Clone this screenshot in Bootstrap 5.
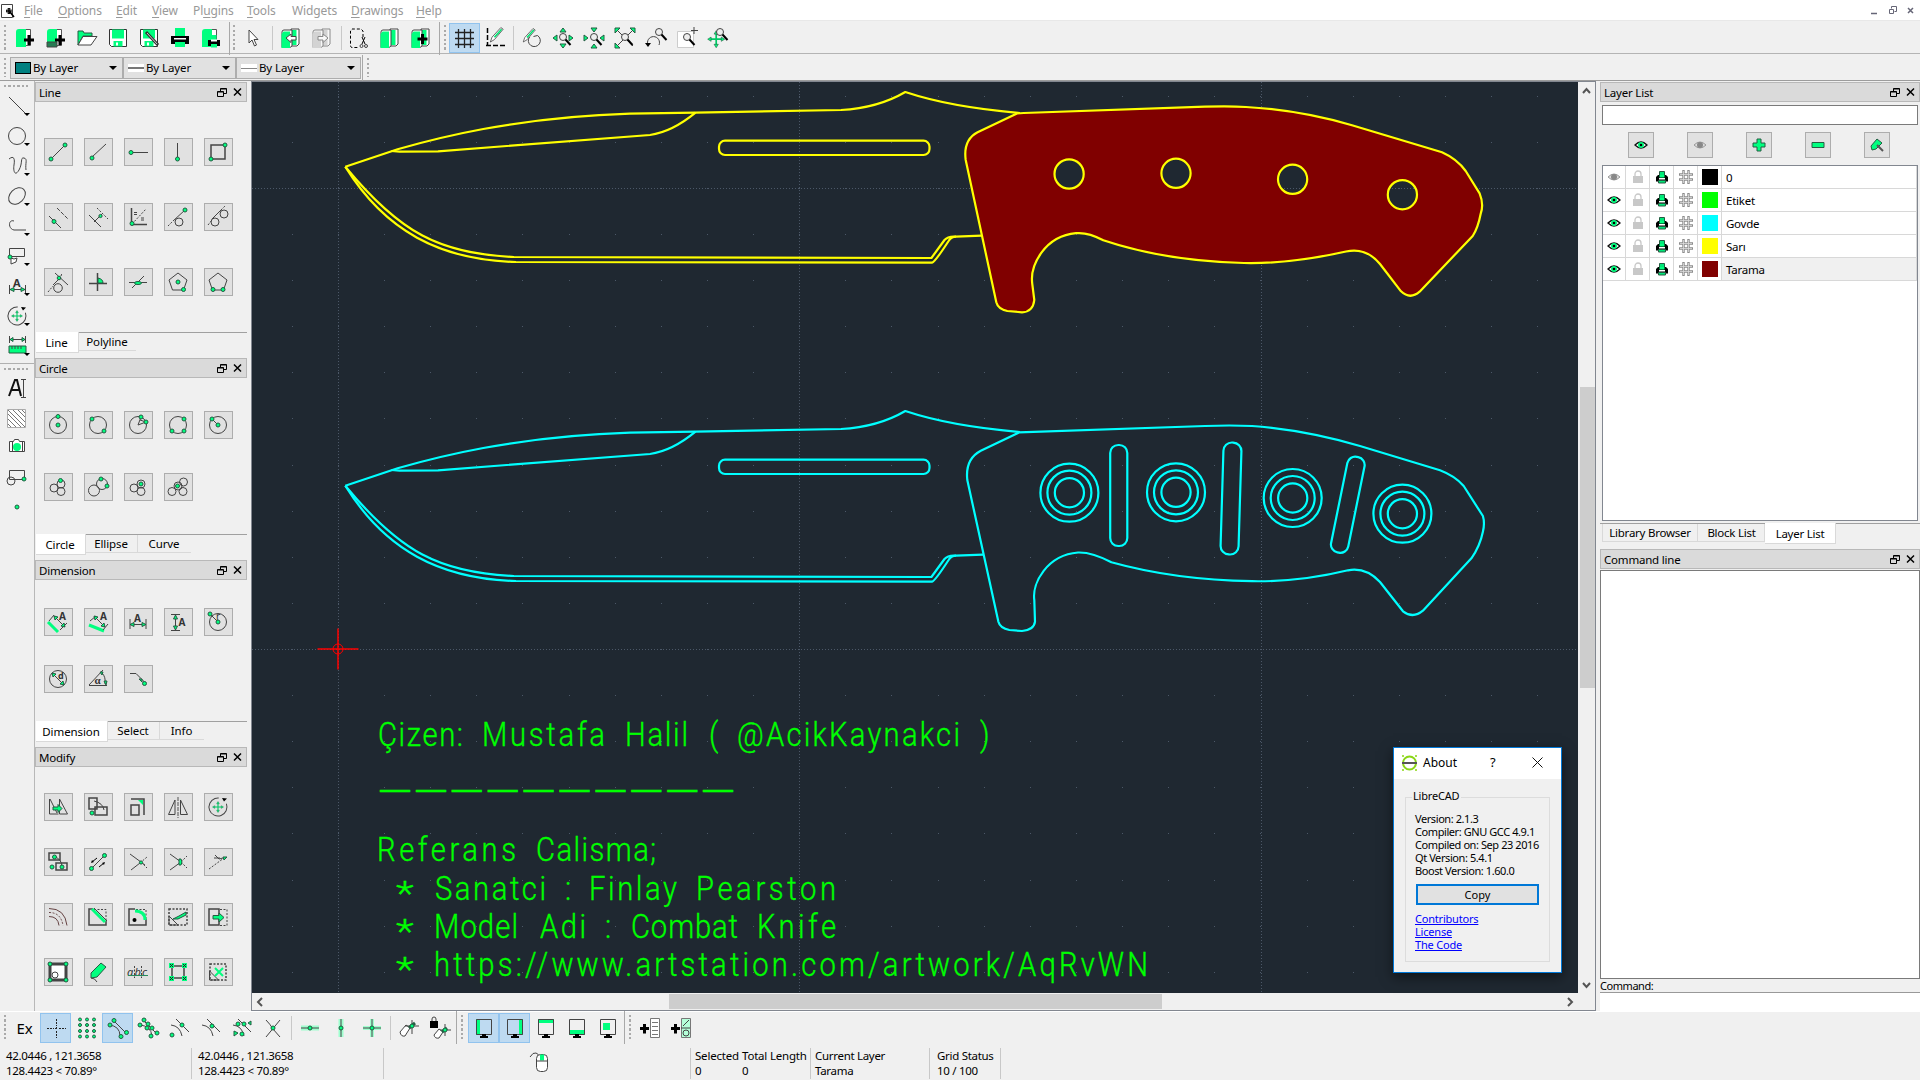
<!DOCTYPE html>
<html lang="en">
<head>
<meta charset="utf-8">
<title>LibreCAD</title>
<link href="https://cdn.jsdelivr.net/npm/bootstrap@5.3.0/dist/css/bootstrap.min.css" rel="stylesheet">
<style>
html,body{height:100%;overflow:hidden}
body{font-family:"Noto Sans","Open Sans",sans-serif;font-size:11px;line-height:14px;color:#000;background:#f0f0f0;letter-spacing:-.1px}
svg{display:block;flex:none;overflow:visible}
.ic{width:24px;height:24px;fill:none;stroke:#444;stroke-width:1}
.ic text{stroke:none;fill:#333;letter-spacing:0}
.g{fill:#00ff7f;stroke:#245c42}
.gn{fill:#00ff7f;stroke:none}
.gl{stroke:#00ff7f;stroke-width:3}
.bk{fill:#000;stroke:none}
.wh{fill:#fff}
.thin{stroke:#999}
.da{stroke-dasharray:2 1.5}
.menubar{height:21px;background:#fff;font-size:12px;color:#999;border-bottom:1px solid #e8e8e8;letter-spacing:-.12px}
.menubar span{position:relative;top:1px}
.menubar u{text-underline-offset:2px}
.tb{height:33px;border-bottom:1px solid #b4b4b4;padding-top:2px}
.tb2{height:27px;border-bottom:1px solid #9c9c9c;padding-top:1px}
.grip{width:2px;height:26px;background:repeating-linear-gradient(#aaa 0 2px,transparent 2px 4.5px)}
.griph{width:27px;height:2px;background:repeating-linear-gradient(90deg,#aaa 0 2px,transparent 2px 4.5px)}
.tbtn{width:31px;height:30px;flex:none;display:flex;align-items:center;justify-content:center;border:1px solid transparent}
.tbtn.on{background:#bedaf1;border-color:#91c3ee}
.vsep{width:1px;background:#c8c8c8;flex:none}
.combo{height:22px;background:#e1e1e1;border:1px solid #adadad;display:flex;align-items:center;flex:none;padding-left:4px;font-size:11.5px}
.combo .car{margin-left:auto;margin-right:5px}
.car{width:0;height:0;border:4px solid transparent;border-top:4px solid #000;border-bottom:0}
.mainrow{height:930px}
.tools{width:35px;border-right:1px solid #b8b8b8;flex:none}
.tools .ic{width:30px;height:30px;margin-left:2px}
.docks{width:216px;flex:none}
.dock{width:212px}
.dtitle{height:20px;background:#dadada;border:1px solid #b8b8b8;display:flex;align-items:center;padding:1px 3px 0;font-size:11.5px;letter-spacing:-.2px;flex:none}
.dtitle svg{width:26px;height:12px;fill:none;stroke:#000;margin:-1px 0 0 auto}
.pads{grid-template-columns:repeat(5,29px);column-gap:11px;padding-left:9px}
.pad{width:29px;height:28px;border:1px solid #adadad;background:#e1e1e1;display:flex;align-items:center;justify-content:center}
.pads .pad svg{margin-left:-1px}
.tabs{border-top:1px solid #a0a0a0;margin-left:1px;font-size:11.5px;height:26px}
.tabx{border:1px solid #d9d9d9;border-width:0 1px 1px 0;height:18px;text-align:center;line-height:18px;flex:none}
.tabx.on{background:#fff;height:21px;line-height:22px;margin-top:-1px}
.docks .tabx{padding-right:1px}
.tabx:last-child:not(.on){border-right:0}
.viewport{flex:none;width:1345px;border:1px solid #828790}
.right{width:320px;margin-left:4px}
.sb{background:#f0f0f0}
.thumb{background:#cdcdcd}
.lrow{display:grid;grid-template-columns:23px 24px 24px 24px 24px 1fr;height:23px}
.lrow>*{border:1px solid #d8d8d8;border-width:0 1px 1px 0;display:flex;align-items:center;justify-content:center;background:#fff}
.lrow>:last-child{justify-content:flex-start;padding:1px 0 0 4px;font-size:11.5px;letter-spacing:-.25px}
.sw{width:16px;height:16px}
.about{position:absolute;left:1393px;top:747px;width:169px;height:226px;border:1px solid #0078d7;background:#f0f0f0;box-shadow:0 4px 12px rgba(0,0,0,.5);line-height:13px;letter-spacing:-.42px}
.atitle{height:31px;background:#fff;font-size:12px;letter-spacing:0;padding-bottom:2px}
.grp{margin:18px 11px 0 11px;height:165px;border:1px solid #dcdcdc;padding:0 0 0 9px;position:relative}
.grp .lg{position:absolute;left:6px;top:-9px;background:#f0f0f0;padding:0 2px 0 1px;letter-spacing:-.2px}
.about a{color:#0000ff;display:block;letter-spacing:-.2px}
.copyb{width:123px;height:21px;border:2px solid #0078d7;background:#e1e1e1;text-align:center;line-height:17px;margin:7px 0 7px 1px;letter-spacing:0}
.status{height:35px;line-height:15px;font-size:11.5px;padding-top:3px;letter-spacing:-.3px}
.status .vsep{height:31px}
.status pre{font:inherit;margin:0;overflow:visible;flex:none}
.cad{font-family:Roboto,"Noto Sans",sans-serif;font-weight:300;font-size:34px;fill:#0f0;stroke:#0f0;stroke-width:.35;letter-spacing:0}
</style>
<script src="https://cdn.jsdelivr.net/npm/bootstrap@5.3.0/dist/js/bootstrap.bundle.min.js"></script>
</head>
<body class="d-flex flex-column">
<svg width="0" height="0" class="position-absolute"><defs>
<circle id="p" r="2" class="g"/>
<g id="win"><path d="M3.500 2.500h6v5h-6zM3.500 3h6" stroke-width="1"/><path fill="#dadada" d="M.5 5.500h6v5h-6zM.5 6h6"/><path stroke-width="1.500" d="M17 2.500l7 7m0-7l-7 7"/></g>
<g id="eye"><path d="M1 6Q7 0 13 6Q7 12 1 6z" fill="#fff" stroke="#111" stroke-width="1.300"/><circle cx="7" cy="6" r="3" class="gn"/><circle cx="7" cy="6" r="1.300" class="bk"/></g>
<g id="eyeg"><path d="M1 6Q7 0 13 6Q7 12 1 6z" fill="#ddd" stroke="#999"/><circle cx="7" cy="6" r="3" fill="#888" stroke="none"/></g>
<g id="lock"><path d="M3 6V4a3 3 0 0 1 6 0v2" fill="none" stroke="#c8c8c8" stroke-width="1.300"/><path d="M1 6h10v7H1z" fill="#c8c8c8" stroke="none"/></g>
<g id="prn"><path d="M3.500 1h5v5h-5z" class="gn" stroke="#245c42"/><path d="M0 6h12v6H0z" class="bk"/><path d="M3 5.500h6v2H3z" class="wh" stroke="none"/><path d="M3 10h6v3.500H3z" class="gn"/></g>
<g id="prl"><path d="M3.500 1.500h5v5h-5z" fill="#00e878" stroke="#245c42"/><path d="M2 5h8l2 2v4.500H0V7z" class="bk"/><path d="M3.500 5h5v2.500h-5z" class="gn"/><path d="M3 8h6v1.500H3z" fill="#fff"/><path d="M2.500 10.500h7v2.500h-7z" fill="#00e878" stroke="#245c42"/></g>
<g id="hash"><path d="M4.500 0v14M9.500 0v14M0 4.500h14M0 9.500h14" stroke="#8c8c8c" stroke-width="2.400"/><path d="M4.500 1v12M9.500 1v12M1 4.500h12M1 9.500h12" stroke="#ddd" stroke-width=".8"/></g>
<g id="doc"><path d="M7.500 3.500h10v16h-10z" fill="#fff" stroke="#555"/><path d="M3 6q0-3 3-3h7v18H3z" class="gn" stroke="#444"/></g>
<g id="docs"><path d="M12 3h8v15l-2 2h-6z" class="wh"/><path d="M11.500 4h6v15h-6z" class="gn"/><path d="M3 6q0-2 2-2h8v16l-2 1.500H3z" class="wh"/><path d="M2.500 8l2-2.500h6.500V22H2.500z" class="gn"/></g>
<g id="plus"><path class="bk" d="M14.500 9h3v3.500H21v3h-3.500V19h-3v-3.500H11v-3h3.500z"/></g>
<g id="floppy"><path d="M3.500 3.500h17v17h-15l-2-2z" class="wh" stroke="#333"/><path d="M6 3.500h12v9H6z" class="gn"/><path d="M7.500 15h9v5.500h-9z" class="gn" stroke="#333"/><path d="M10 16.500h2v3h-2z" class="wh" stroke="none"/></g>
<g id="mag"><circle cx="12" cy="11" r="3.500" fill="#eee"/><path d="M14.500 13.500l5 5.500" stroke="#000" stroke-width="2"/></g>
<g id="pencil"><path d="M3 20l2-6L16 2l3 2L8 17z" class="wh"/><path d="M8 14L17 4" stroke="#00e070" stroke-width="2"/></g>
<g id="arr4"><path d="M12 4v16M4 12h16" stroke="#00c865" stroke-width="2"/><path class="g" stroke-width=".7" d="M12 2l2.500 4h-5zM12 22l2.500-4h-5zM2 12l4-2.500v5zM22 12l-4-2.500v5z"/></g>
<g id="rotar"><circle cx="12" cy="12" r="9" stroke-dasharray="46 10" transform="rotate(-20 12 12)"/><path class="bk" d="M16 3l5 .5-3 3z"/><g transform="translate(5.400 5.400) scale(.55)"><use href="#arr4"/></g></g>
<g id="mon"><path d="M4.500 3.500h15v15h-15z"/><path class="bk" d="M10 18h4v2h2v2H8v-2h2z"/></g>
<path id="dd" class="bk" d="M22 22h6l-3 3z"/>
</defs></svg>

<nav class="menubar d-flex align-items-center flex-shrink-0">
<svg class="ic" style="width:16px;height:16px;margin:1px 8px 0 0" viewBox="0 0 16 16"><path class="wh" d="M1.500 1.500h11v13h-11z"/><circle cx="9" cy="8" r="2.500"/><path d="M10 9l4 5M9 5v6M6 8h5" stroke="#000" stroke-width="1.600"/></svg>
<span style="width:34px"><u>F</u>ile</span><span style="width:58px"><u>O</u>ptions</span><span style="width:36px"><u>E</u>dit</span><span style="width:41px"><u>V</u>iew</span><span style="width:54px">Pl<u>u</u>gins</span><span style="width:45px"><u>T</u>ools</span><span style="width:59px">Widgets</span><span style="width:65px"><u>D</u>rawings</span><span><u>H</u>elp</span>
<svg class="ms-auto me-1" width="46" height="12" fill="none" stroke="#667"><path stroke-width="1.500" d="M1 9.500h6"/><path d="M21.500 4.500v-2h5v5h-2M19.500 5.500h4v4h-4z"/><path d="M38 4l5 5m0-5l-5 5" stroke-width="1.500"/></svg>
</nav>

<div class="tb d-flex align-items-center flex-shrink-0">
<div class="grip ms-1" style="margin-right:3.500px"></div>
<div class="tbtn"><svg class="ic"><use href="#doc"/><use href="#plus"/></svg></div>
<div class="tbtn"><svg class="ic"><use href="#doc"/><path d="M3 16h10v5H3z" fill="#277a52"/><use href="#plus"/></svg></div>
<div class="tbtn"><svg class="ic"><path class="g" d="M3 19V5h5l1 2h8v3H8z"/><path class="wh" d="M3 19l5-8.500h14L16 19z" fill="#ddd"/></svg></div>
<div class="tbtn"><svg class="ic"><use href="#floppy"/></svg></div>
<div class="tbtn"><svg class="ic"><use href="#floppy"/><path d="M9 6l12 13" stroke="#333" stroke-width="3"/><path d="M10 7l10 11" stroke="#ccc"/></svg></div>
<div class="tbtn"><svg class="ic"><path class="gn" stroke="#222" d="M7 2h10v9H7z"/><path class="bk" d="M3 10h18v8H3z"/><path class="wh" stroke="none" d="M6 12h12v1.500H6z"/><path class="gn" stroke="#222" d="M7 16h10v5H7z"/></svg></div>
<div class="tbtn"><svg class="ic"><use href="#doc"/><g transform="translate(9 8)"><use href="#prn"/></g></svg></div>
<div class="vsep" style="height:33px;margin-left:2px;background:#a8a8a8"></div>
<div class="grip" style="margin:0 3px"></div>
<div class="tbtn"><svg class="ic"><path class="wh" d="M8 4v13l3-3 2.500 6 2-1-2.500-5.500h4z"/></svg></div>
<div class="vsep" style="height:24px;margin:0 3px"></div>
<div class="tbtn"><svg class="ic"><use href="#docs"/><path class="wh" d="M7 12l5-4v2.500h5v3.500h-5v2.500z"/></svg></div>
<div class="tbtn"><svg class="ic" style="filter:grayscale(1);opacity:.6"><use href="#docs"/><path class="wh" d="M18 12l-5-4v2.500H8v3.500h5v2.500z"/></svg></div>
<div class="vsep" style="height:24px;margin:0 2px 0 3px"></div>
<div class="tbtn"><svg class="ic"><path stroke="#000" stroke-dasharray="3 2" d="M16 11V5l-2-2H5L3.500 5v15l1 1.500H12"/><path stroke="#000" d="M15 11l3 7m0-7l-3 7"/><circle cx="14.500" cy="20" r="1.500"/><circle cx="19" cy="20" r="1.500"/></svg></div>
<div class="tbtn"><svg class="ic"><use href="#docs"/></svg></div>
<div class="tbtn"><svg class="ic"><use href="#docs"/><path class="bk" d="M12 8h3v3.500h3.500v3H15V18h-3v-3.500H8.500v-3H12z"/></svg></div>
<div class="vsep" style="height:33px;margin-left:2px;background:#a8a8a8"></div>
<div class="grip" style="margin:0 3px 0 4px"></div>
<div class="tbtn on"><svg class="ic"><path stroke="#222" stroke-width="1.300" d="M6.500 3v19M12.500 3v19M18.500 3v19M3 6.500h19M3 12.500h19M3 18.500h19"/></svg></div>
<div class="tbtn"><svg class="ic"><path stroke="#000" stroke-width="1.500" stroke-dasharray="5 2" d="M4.500 2v18M3 19.500h19"/><g transform="translate(5 0) scale(.8)"><use href="#pencil"/></g></svg></div>
<div class="vsep" style="height:24px;margin:0 3px 0 2px"></div>
<div class="tbtn"><svg class="ic"><g transform="translate(1 1) scale(.75)"><use href="#pencil"/></g><path d="M9.500 11a6 6 0 1 0 8-1.500l-4 1"/></svg></div>
<div class="tbtn"><svg class="ic"><use href="#mag"/><path class="g" d="M12 2l3 4H9zM12 22l3-4H9zM2 12l4-3v6zM22 12l-4-3v6z"/></svg></div>
<div class="tbtn"><svg class="ic"><use href="#mag"/><path class="g" d="M12 6l3-4H9zM12 18l3 4H9zM6 12L2 9v6zM18 12l4-3v6z"/></svg></div>
<div class="tbtn"><svg class="ic"><path d="M4 4l16 16M20 4L4 20"/><use href="#mag"/><path class="g" d="M2 2h5L2 7zM22 2h-5l5 5zM2 22h5l-5-5z"/></svg></div>
<div class="tbtn"><svg class="ic"><path d="M4 19a6 6 0 1 1 11 0"/><path class="bk" d="M1 17h6l-3 4z"/><g transform="translate(3 -5)"><use href="#mag"/></g></svg></div>
<div class="tbtn"><svg class="ic"><path d="M2.500 5.500h16v16h-16z" fill="#fff" stroke="#ccc"/><use href="#mag"/><path d="M19 1v7M16 4.500h7"/></svg></div>
<div class="tbtn"><svg class="ic"><g transform="translate(0 3) scale(.85)"><use href="#arr4"/></g><g transform="translate(2 -5)"><use href="#mag"/></g></svg></div>
</div>

<div class="tb2 d-flex align-items-center flex-shrink-0">
<div class="grip ms-1" style="height:19px;margin-right:4px"></div>
<div class="combo" style="width:113px"><span style="width:16px;height:12px;background:#008080;border:1px solid #000;margin-right:2px"></span>By Layer<i class="car"></i></div>
<div class="combo" style="width:113px"><span style="width:16px;height:8px;margin-right:2px;background:linear-gradient(#fff 3px,#777 3px 5px,#fff 5px)"></span>By Layer<i class="car"></i></div>
<div class="combo" style="width:125px"><span style="width:16px;height:8px;margin-right:2px;background:linear-gradient(#fff 4px,#888 4px 5px,#fff 5px)"></span>By Layer<i class="car"></i></div>
<div class="vsep" style="height:26px;margin:0 4px 0 1px;background:#a8a8a8"></div><div class="grip" style="height:19px"></div>
</div>

<div class="mainrow d-flex flex-shrink-0">
<div class="tools">
<div class="griph" style="margin:4px 0 4px 4px"></div>
<svg class="ic"><path d="M7 6l17 17"/><use href="#dd"/></svg>
<svg class="ic"><circle cx="15" cy="15" r="8.500"/><use href="#dd"/></svg>
<svg class="ic"><path d="M7 8c5-4 6 0 5 6s1 12 5 5 1-13 5-12 1 5 2 12"/><use href="#dd"/></svg>
<svg class="ic"><ellipse cx="15" cy="15" rx="9.500" ry="7" transform="rotate(-45 15 15)"/><use href="#dd"/></svg>
<svg class="ic"><path d="M12 10c-6-2-6 8 0 9h12"/><use href="#dd"/></svg>
<svg class="ic"><path d="M7.500 7.500h15v8h-15z"/><path class="wh" d="M9 17l3 1 3-1-1 4-5 2z"/><use href="#p" x="8" y="16"/><use href="#dd"/></svg>
<svg class="ic"><path d="M7.500 14v9M23.500 14v9M8 18.500h15"/><path class="g" d="M8 18.500l4-2v4zM23 18.500l-4-2v4z"/><text x="11" y="15.500" font-size="11" font-weight="700">A</text><use href="#dd"/></svg>
<svg class="ic"><g transform="translate(3 3)"><use href="#rotar"/></g><use href="#dd"/></svg>
<svg class="ic"><path d="M7.500 5v7M23.500 5v7M8 8.500h15"/><path class="g" d="M8 8.500l3-2v4zM23 8.500l-3-2v4zM7 15h17v7H7z"/><path d="M10 15v3m3-3v3m3-3v3m3-3v3"/><use href="#dd"/></svg>
<div style="height:1px;background:#b0b0b0;margin-top:2px"></div>
<div class="griph" style="margin:4px 0 3px 4px"></div>
<svg class="ic"><path d="M7 23l6-16h2l4 16M9 17h8" stroke="#111" stroke-width="2"/><path d="M21.500 7v17M19 6.500h5M19 24.500h5"/></svg>
<svg class="ic"><path d="M5.500 6.500h18v18h-18z" fill="#fff" stroke="#aaa"/><path stroke="#777" d="M6 21l3 3M6 16l8 8M6 11l13 13M6 7l17 17M11 7l12 12M16 7l7 7M20 7l3 3"/></svg>
<svg class="ic" style="margin-top:-1px"><path class="wh" d="M7.500 9.500h4l1-2h4l1 2h5v10h-15zM10.500 9.500v10M20.500 9.500v10"/><circle cx="15" cy="15" r="4" class="gn" stroke="#555"/></svg>
<svg class="ic"><path d="M7.500 8.500h15v9h-15z"/><circle cx="9" cy="19" r="4"/><use href="#p" x="22" y="17"/></svg>
<svg class="ic"><use href="#p" x="15" y="15"/></svg>
</div>

<div class="docks">
<section class="dock" style="height:277px;padding-top:1px">
<div class="dtitle">Line<svg><use href="#win"/></svg></div>
<div class="pads d-grid" style="row-gap:37px;padding-top:36px;height:230px;align-content:start">
<div class="pad"><svg class="ic"><path d="M5 19L19 5"/><use href="#p" x="5" y="19"/><use href="#p" x="19" y="5"/></svg></div>
<div class="pad"><svg class="ic"><path d="M6 17L20 4"/><use href="#p" x="6" y="18"/></svg></div>
<div class="pad"><svg class="ic"><path d="M5 12.500h17"/><use href="#p" x="5" y="12.500"/></svg></div>
<div class="pad"><svg class="ic"><path d="M11.500 3v16"/><use href="#p" x="11.500" y="19"/></svg></div>
<div class="pad"><svg class="ic"><path stroke-width="1.500" d="M5 5h14v14H5z"/><use href="#p" x="5" y="19"/><use href="#p" x="19" y="5"/></svg></div>
<div class="pad"><svg class="ic"><path d="M3 11l12 12"/><path stroke-dasharray="4 1.500" d="M11 3l11 11"/><use href="#p" x="8" y="16.500"/></svg></div>
<div class="pad"><svg class="ic"><path d="M3 10l12 12M8 17l8-8"/><path class="da" d="M11 3l11 11"/><circle cx="14.500" cy="11" r="1.600" class="g"/></svg></div>
<div class="pad"><svg class="ic"><path stroke-width="1.500" d="M5.500 3v16.500H21"/><path class="da" d="M6 19L20 4"/><path d="M8 7.500h3m-3 2h3m4 3.500h3m-3 2h3"/><use href="#p" x="6" y="18.500"/></svg></div>
<div class="pad"><svg class="ic"><circle cx="13" cy="17" r="4"/><path d="M7 16L19 5"/><path class="da" d="M2 21l5-5"/><use href="#p" x="19" y="5"/></svg></div>
<div class="pad"><svg class="ic"><circle cx="9" cy="17" r="4"/><circle cx="18" cy="9" r="4"/><path d="M6 14l9-9"/><path class="da" d="M2 20l4-5M15 5l4-4"/></svg></div>
<div class="pad"><svg class="ic"><circle cx="12" cy="18" r="4.300"/><path d="M7 15l8-8M9 3l13 12"/><path class="da" d="M2 22l5-6M15 6l1-3"/><circle class="g" cx="13" cy="8" r="1.800"/></svg></div>
<div class="pad"><svg class="ic"><path stroke-width="1.500" d="M11.500 3v18M3 13.500h18"/><path class="g" d="M12 8q5 1 5 5h-5z"/></svg></div>
<div class="pad"><svg class="ic"><path d="M3 12.500h18M6 18L18 6"/><ellipse cx="12" cy="13" rx="3.500" ry="1.500" class="g"/></svg></div>
<div class="pad"><svg class="ic"><path d="M12 3l9 7-3.500 10h-11L3 10z"/><use href="#p" x="12" y="12"/><use href="#p" x="17.500" y="19.500"/></svg></div>
<div class="pad"><svg class="ic"><path d="M12 3l9 7-3.500 10h-11L3 10z"/><use href="#p" x="7" y="19.500"/><use href="#p" x="17" y="19.500"/></svg></div>
</div>
<div class="tabs d-flex"><div class="tabx on" style="width:43px">Line</div><div class="tabx" style="width:57px">Polyline</div></div>
</section>

<section class="dock" style="height:202px">
<div class="dtitle">Circle<svg><use href="#win"/></svg></div>
<div class="pads d-grid" style="row-gap:34px;padding-top:33px;height:156px;align-content:start">
<div class="pad"><svg class="ic"><circle cx="12" cy="12" r="8.500"/><use href="#p" x="12" y="3.500"/><use href="#p" x="12" y="12"/></svg></div>
<div class="pad"><svg class="ic"><circle cx="12" cy="12" r="8.500"/><use href="#p" x="6" y="6"/><use href="#p" x="18" y="18"/></svg></div>
<div class="pad"><svg class="ic"><circle cx="12" cy="12" r="8.500"/><path d="M15 4l-3 8 8-3-6-2"/><use href="#p" x="15" y="4"/><use href="#p" x="20" y="9"/></svg></div>
<div class="pad"><svg class="ic"><circle cx="12" cy="12" r="8.500"/><use href="#p" x="18" y="6"/><use href="#p" x="6" y="18"/><use href="#p" x="18" y="18"/></svg></div>
<div class="pad"><svg class="ic"><circle cx="12" cy="12" r="8.500"/><path d="M6 6l6 6"/><use href="#p" x="6" y="6"/><use href="#p" x="12" y="12"/></svg></div>
<div class="pad"><svg class="ic"><circle cx="8" cy="13" r="4"/><circle cx="15" cy="9" r="4"/><circle cx="15" cy="16.500" r="4"/><use href="#p" x="14.500" y="5.500"/></svg></div>
<div class="pad"><svg class="ic"><circle cx="8" cy="15.500" r="5.500"/><circle cx="16" cy="9" r="5.500"/><use href="#p" x="15" y="4"/><use href="#p" x="21" y="11"/></svg></div>
<div class="pad"><svg class="ic"><circle cx="8" cy="13" r="4"/><circle cx="15" cy="9" r="4"/><circle cx="15" cy="16.500" r="4"/><use href="#p" x="15" y="9"/></svg></div>
<div class="pad"><svg class="ic"><circle cx="6" cy="16.500" r="4"/><circle cx="12" cy="11" r="4"/><circle cx="17" cy="16.500" r="4"/><circle cx="17.500" cy="7" r="4"/><use href="#p" x="11.500" y="11"/></svg></div>
</div>
<div class="tabs d-flex"><div class="tabx on" style="width:50px">Circle</div><div class="tabx" style="width:52px">Ellipse</div><div class="tabx" style="width:53px">Curve</div></div>
</section>

<section class="dock" style="height:187px">
<div class="dtitle">Dimension<svg><use href="#win"/></svg></div>
<div class="pads d-grid" style="row-gap:29px;padding-top:28px;height:141px;align-content:start">
<div class="pad"><svg class="ic"><path class="gl" d="M2 12l10 10"/><path d="M3 11l5-6M14 20l7-7M8 6l11 11"/><path class="g" d="M8 6l4 1-3 3zM19 17l-4-1 3-3z"/><text x="13" y="10" font-size="10" font-weight="700">A</text></svg></div>
<div class="pad"><svg class="ic"><path class="gl" d="M3 15l15 6"/><path d="M4 11l6-5M17 20l5-6M8 6l11 11"/><path class="g" d="M8 6l4 1-3 3zM19 17l-4-1 3-3z"/><text x="14" y="10" font-size="10" font-weight="700">A</text></svg></div>
<div class="pad"><svg class="ic"><path d="M4 9v10M20 9v10M4 14.500h16"/><path class="g" d="M4 14.500l4-2v4zM20 14.500l-4-2v4z"/><text x="8" y="12" font-size="10" font-weight="700">A</text></svg></div>
<div class="pad"><svg class="ic"><path d="M5 4.500h9M5 20.500h9M9.500 5v15"/><path class="g" d="M9.500 5l-2 4h4zM9.500 20l-2-4h4z"/><text x="12.500" y="16" font-size="10" font-weight="700">A</text></svg></div>
<div class="pad"><svg class="ic"><circle cx="12" cy="12" r="8.500"/><path d="M4 4l8 8"/><text x="10" y="10" font-size="10">r</text><use href="#p" x="4" y="4"/><use href="#p" x="12" y="12"/></svg></div>
<div class="pad"><svg class="ic"><circle cx="12" cy="12" r="8.500"/><path d="M6.500 6.500l11 11"/><path class="g" d="M6 6l4 1-3 3zM18 18l-4-1 3-3z"/><text x="12" y="12" font-size="9" font-weight="700">d</text></svg></div>
<div class="pad"><svg class="ic"><path d="M3 18.500h18M3 18L17 3M16 6q4 4 3 11"/><path class="g" d="M14 5l3 0-1 3zM18 14h3l-1 4z"/><text x="8.500" y="17" font-size="11" font-weight="700" font-family="Liberation Serif">α</text></svg></div>
<div class="pad"><svg class="ic"><path d="M4 6.500h6l9 9"/><path class="g" d="M13 12l3 0 0 3z"/><use href="#p" x="18.500" y="16.500"/></svg></div>
</div>
<div class="tabs d-flex"><div class="tabx on" style="width:72px">Dimension</div><div class="tabx" style="width:52px">Select</div><div class="tabx" style="width:44px">Info</div></div>
</section>

<section class="dock">
<div class="dtitle">Modify<svg><use href="#win"/></svg></div>
<div class="pads d-grid" style="row-gap:27px;padding-top:26px;align-content:start">
<div class="pad"><svg class="ic"><path d="M3.500 4v15h9M4 4l7 14M13.500 4v15h8zM13.500 6v12"/><path class="g" d="M7 12h5v-2.500l4 4-4 4V15H7z"/></svg></div>
<div class="pad"><svg class="ic"><path stroke-width="1.500" d="M3 3h8v11H3zM9 12h12v8H9z"/><path d="M8 6q9 2 10 9"/><use href="#p" x="6" y="18"/></svg></div>
<div class="pad"><svg class="ic"><path stroke-width="1.500" d="M5 10h8v10H5zM5 4h13v16"/><path class="gn" d="M12 5h5v5z"/></svg></div>
<div class="pad"><svg class="ic"><path d="M2.500 19.500L9 5v14.500zM14.500 5v14.500H21.500z"/><path stroke="#999" stroke-width="2" stroke-dasharray="4 1" d="M12 2v21"/></svg></div>
<div class="pad"><svg class="ic"><use href="#rotar"/></svg></div>
<div class="pad"><svg class="ic"><path stroke-width="1.500" d="M3 3h11v7H3zM10 13h11v7H10z"/><path d="M8 7q7 1 8 9"/><use href="#p" x="8.500" y="7"/><use href="#p" x="6" y="17"/><use href="#p" x="16" y="17"/></svg></div>
<div class="pad"><svg class="ic"><path d="M6 18L18 6"/><use href="#p" x="5.500" y="18.500"/><use href="#p" x="18.500" y="5.500"/><path d="M11 8l-5 4M13 17l5-4" stroke="#000"/><path class="bk" d="M5 13l1-3 2 2zM19 12l-1 3-2-2z"/></svg></div>
<div class="pad"><svg class="ic"><path d="M4 4l15 11M5 20l9-7"/><path class="da" d="M14 13l7-6M15 12l6 6"/><circle class="g" cx="15" cy="12.500" r="1.600"/></svg></div>
<div class="pad"><svg class="ic"><path d="M4 4l11 8-11 8"/><path class="da" d="M15 12l6-6M15 12l6 6"/><path class="g" d="M13 9h2l1 3-1 3h-2z"/></svg></div>
<div class="pad"><svg class="ic"><path class="da" stroke-dasharray="4 1.500" d="M3 19L18 8"/><path d="M9 5l4 4 4-1M8 8h6"/><path class="g" d="M17 7h4l-3 3z"/></svg></div>
<div class="pad"><svg class="ic"><path stroke="#644" d="M3 3.500q16 0 18 17M3 11.500q9 0 10 9"/><path class="da" stroke="#644" d="M3 7.500q12 0 14 13"/></svg></div>
<div class="pad"><svg class="ic"><path stroke-width="1.500" d="M7 4H3v16h17v-4"/><path class="da" d="M8 4.500h12v12"/><path class="gl" d="M6 4l13 13"/><path d="M8 3l13 13"/></svg></div>
<div class="pad"><svg class="ic"><path stroke-width="1.500" d="M9 4H3v16h17v-6"/><path class="da" d="M10 4.500h10v10"/><path class="gl" d="M9 6q10 0 10 9"/><circle cx="8.500" cy="15" r="2" class="bk"/></svg></div>
<div class="pad"><svg class="ic"><path class="da" stroke-width="1.500" d="M3 4h18v16H3z"/><path d="M3 11v9h9z"/><path class="g" d="M7 14l6-3 7-4v3l-8 4z"/></svg></div>
<div class="pad"><svg class="ic"><path stroke-width="1.500" d="M3 4h10v16H3z"/><path class="da" d="M14 4.500h7v16h-7"/><path class="g" d="M7 10.500h6V8l5 4.500-5 4.500v-3H7z"/></svg></div>
<div class="pad"><svg class="ic"><path fill="#fff" stroke-width="3" d="M4 4h16v16H4z"/><circle cx="9" cy="15" r="3"/><use href="#p" x="4" y="4"/><use href="#p" x="20" y="4"/><use href="#p" x="4" y="20"/><use href="#p" x="20" y="20"/></svg></div>
<div class="pad"><svg class="ic"><path class="g" d="M5 13l10-10 5 4-9 10-6 1z"/><path d="M5 18q4 0 6 4"/></svg></div>
<div class="pad"><svg class="ic"><text x="1" y="16" font-size="11" font-style="italic">a</text><text x="8.500" y="16" font-size="11" font-style="italic">b</text><text x="16" y="16" font-size="11" font-style="italic">c</text><path class="da" d="M8.500 6v12M15.500 6v12"/><path d="M2 15.500h20" stroke="#298a5a"/></svg></div>
<div class="pad"><svg class="ic"><path stroke-width="1.500" d="M6 6h12v12H6z"/><path class="gn" d="M3 3h5v5H3zM16 3h5v5h-5zM3 16h5v5H3zM16 16h5v5h-5z"/><path stroke="#222" d="M4 4l3 3m0-3L4 7M17 4l3 3m0-3l-3 3M4 17l3 3m0-3l-3 3M17 17l3 3m0-3l-3 3"/></svg></div>
<div class="pad"><svg class="ic"><path class="da" stroke-width="1.500" d="M4 4h16v16H4z"/><path d="M3.500 11v9h9z"/><path stroke="#00ff7f" stroke-width="2" d="M9 8l8 8m0-8l-8 8"/></svg></div>
</div>
</section>
</div>

<div class="viewport d-flex flex-column">
<div class="d-flex">
<svg id="canvas" width="1326" height="911" viewBox="252 82 1326 911" style="background:#1f2831;overflow:hidden" fill="none">
<g id="grid" stroke="#4c5868" shape-rendering="crispEdges"></g>
<g stroke="#ff0" stroke-width="2.200" stroke-linejoin="round">
<path d="M345.300 166.700L397.600 149.300Q440 137 483.300 129Q555 116 630 113.700L695.500 112.700L841 110Q878 108 905.300 92Q950 107 1020 113"/>
<path d="M391.400 151L399.600 151.700L438 151.300L650 135Q672 132 695.500 112.700"/>
<path d="M345.300 166.700C385 231 440 260 516 262L932 262.700Q935 262 948.600 241Q951 237 956 236.700L981.600 235.700"/>
<path d="M345.300 166.700C400 233 440 254 513.900 257L931.400 258L944.500 240Q948 236 956 236.700"/>
<rect x="719" y="140.700" width="210.500" height="14.300" rx="6"/>
<path fill="#800000" fill-rule="evenodd" d="M1023.700 113L1205 106.700Q1230 106 1246 107Q1300 110 1352 125.300L1442 152.300Q1457 159 1465.700 171L1479.600 193.300Q1484 204 1480.800 213.300Q1478 228 1472.700 236L1419.600 291.700Q1410 300 1401 291.300L1380 264Q1366 247 1346 251.500Q1290 264 1244 263Q1165 261 1103.300 240.300Q1088 232 1076 233.200C1045 236 1030 265 1032.200 283.300L1034.300 300Q1033 312 1022 312.300L1007.300 311Q998 309 996.300 302.300L965.700 160Q963 140 977.600 132.300L1017 113.500zM1054.500 174a14.600 14.600 0 1 0 29.200 0a14.600 14.600 0 1 0-29.200 0M1161.400 173.300a14.600 14.600 0 1 0 29.200 0a14.600 14.600 0 1 0-29.200 0M1278 179.300a14.600 14.600 0 1 0 29.200 0a14.600 14.600 0 1 0-29.200 0M1387.800 194.700a14.600 14.600 0 1 0 29.200 0a14.600 14.600 0 1 0-29.200 0"/>
</g>
<g stroke="#0ff" stroke-width="2.200" stroke-linejoin="round">
<g transform="translate(0 319)">
<path d="M345.300 166.700L397.600 149.300Q440 137 483.300 129Q555 116 630 113.700L695.500 112.700L841 110Q878 108 905.300 92Q950 107 1020 113"/>
<path d="M391.400 151L399.600 151.700L438 151.300L650 135Q672 132 695.500 112.700"/>
<path d="M345.300 166.700C385 231 440 260 516 262L932 262.700Q935 262 948.600 241Q951 237 956 236.700L983 235.700"/>
<path d="M345.300 166.700C400 233 440 254 513.900 257L931.400 258L944.500 240Q948 236 956 236.700"/>
<rect x="719" y="140.700" width="210.500" height="14.300" rx="6"/>
</g>
<path d="M1019 432.300L1205 426Q1230 425 1252 426Q1305 430 1360 446L1440 470.300Q1455 476 1463.700 486L1482.900 516Q1485 523 1482.900 531.700Q1480 546 1471.400 558.300L1422.900 610.700Q1413 619 1403 611.300L1380 582Q1366 567 1348 570.300Q1300 582 1252 581.200Q1175 580 1111.400 562.300Q1092 552 1078 552.500C1047 555 1032 583 1034.300 600L1035 621.700Q1034 630 1022 631L1009.400 630Q1000 628 998.400 621.700L967.300 480Q965 459 980.800 450.700L1019 432.500"/>
<g id="rivets"></g>
<rect x="1110.200" y="445" width="17.100" height="101" rx="8"/>
<rect x="1222" y="442.500" width="18" height="112" rx="8.500" transform="rotate(1.700 1231 498.500)"/>
<rect x="1339" y="456" width="17.500" height="97.500" rx="8" transform="rotate(11.500 1347.700 505)"/>
</g>
<g stroke="#f00"><path d="M317.500 649h41M338 628.500v41" stroke-width="1.500"/><circle cx="338" cy="649" r="5"/></g>
<g class="cad" id="notes"></g>
</svg>
<div class="sb d-flex flex-column align-items-center ms-auto" style="width:16px">
<svg width="9" height="20" style="margin-left:-2px" fill="none" stroke="#555" stroke-width="2"><path d="M1 11l3.500-4L8 11"/></svg>
<div class="thumb" style="width:15px;height:301px;margin-top:285px"></div>
<svg class="mt-auto" width="9" height="16" style="margin-left:-2px" fill="none" stroke="#555" stroke-width="2"><path d="M1 6l3.500 4L8 6"/></svg>
</div></div>
<div class="sb d-flex align-items-center flex-grow-1">
<svg width="16" height="10" fill="none" stroke="#555" stroke-width="2"><path d="M10 1L6 5l4 4"/></svg>
<div class="thumb" style="height:15px;width:493px;margin-left:401px"></div>
<svg width="16" height="10" style="margin-left:400px" fill="none" stroke="#555" stroke-width="2"><path d="M6 1l4 4-4 4"/></svg>
</div>
</div>

<div class="right d-flex flex-column">
<div class="dtitle" style="margin-top:1px">Layer List<svg><use href="#win"/></svg></div>
<div style="height:20px;border:1px solid #7a7a7a;background:#fff;margin:3px 2px 7px" class="flex-shrink-0"></div>
<div class="d-flex flex-shrink-0" style="gap:33px;padding-left:28px;height:33px">
<div class="pad" style="width:26px;height:26px"><svg width="14" height="12"><use href="#eye"/></svg></div>
<div class="pad" style="width:26px;height:26px"><svg width="14" height="12"><use href="#eyeg"/></svg></div>
<div class="pad" style="width:26px;height:26px"><svg width="14" height="14"><path class="g" d="M5 1h4v4h4v4H9v4H5V9H1V5h4z"/></svg></div>
<div class="pad" style="width:26px;height:26px"><svg width="14" height="14"><path class="g" d="M1 4.500h12v5H1z"/></svg></div>
<div class="pad" style="width:26px;height:26px"><svg width="14" height="14"><path class="g" d="M1 8l6-7 5 4-6 6-4 1z"/><path d="M7 7l6 6" stroke="#555" stroke-width="2"/></svg></div>
</div>
<div class="flex-shrink-0 bg-white" style="height:356px;border:1px solid #828790;margin:0 2px" id="layers"></div>
<div class="tabs d-flex flex-shrink-0" style="margin:2px 0 0;padding-left:2px;height:26px;letter-spacing:-.25px"><div class="tabx" style="width:96px;border-left-width:1px">Library Browser</div><div class="tabx" style="width:67px;padding-left:1px">Block List</div><div class="tabx on" style="width:71px">Layer List</div></div>
<div class="dtitle">Command line<svg><use href="#win"/></svg></div>
<div class="flex-shrink-0 bg-white" style="height:409px;border:1px solid #7a7a7a;margin-top:1px"></div>
<div class="flex-shrink-0" style="height:13px;line-height:14px;letter-spacing:-.45px">Command:</div>
<div class="bg-white flex-grow-1" style="border-top:1px solid #999"></div>
</div>
</div>

<div class="d-flex align-items-center flex-shrink-0" style="height:34px;padding-bottom:2px;border-top:1px solid #fff">
<div class="grip ms-1" style="margin-right:3px"></div>
<div class="tbtn" style="font-size:15px">Ex</div>
<div class="tbtn on"><svg class="ic"><path stroke="#222" stroke-dasharray="2 1" d="M12.500 3v7m0 5v7M3 12.500h7m5 0h7M12.500 11v3M11 12.500h3"/></svg></div>
<div class="tbtn"><svg class="ic" id="dots9"></svg></div>
<div class="tbtn on"><svg class="ic"><path d="M8 5l12 12M3 9q11 1 11 11" /><use href="#p" x="8" y="4.500"/><use href="#p" x="20.500" y="16.500"/><use href="#p" x="4" y="9"/><use href="#p" x="15" y="20.500"/></svg></div>
<div class="tbtn"><svg class="ic"><path d="M6 4l14 14M3 9q11 1 12 11"/><use href="#p" x="7" y="4"/><use href="#p" x="11" y="8"/><use href="#p" x="15" y="12"/><use href="#p" x="20" y="17"/><use href="#p" x="3" y="9"/><use href="#p" x="10" y="12"/><use href="#p" x="14" y="20"/></svg></div>
<div class="tbtn"><svg class="ic"><path d="M8 3l13 13M3 9q9 1 11 11"/><use href="#p" x="14" y="9"/><use href="#p" x="4" y="19"/></svg></div>
<div class="tbtn"><svg class="ic"><path d="M8 3l13 13M3 9q9 1 11 11"/><use href="#p" x="13" y="10"/></svg></div>
<div class="tbtn"><svg class="ic"><path d="M8 3l13 13M3 9q9 1 11 11"/><use href="#p" x="8" y="8"/><use href="#p" x="14" y="8"/><use href="#p" x="12" y="18"/><path class="g" d="M18 7l3-2v4zM4 15l4 2-4 3z"/></svg></div>
<div class="tbtn"><svg class="ic"><path d="M5 4q4 4 7 9l7 8M19 4L5 21"/><use href="#p" x="12" y="12"/></svg></div>
<div class="vsep" style="height:24px;margin:0 2px 0 3px"></div>
<div class="tbtn"><svg class="ic"><path stroke="#9fffcf" stroke-width="5" d="M3 12h18"/><path d="M3 12h18"/><use href="#p" x="12" y="12"/></svg></div>
<div class="tbtn"><svg class="ic"><path stroke="#9fffcf" stroke-width="5" d="M12 3v18"/><path d="M12 3v18"/><use href="#p" x="12" y="12"/></svg></div>
<div class="tbtn"><svg class="ic"><path stroke="#9fffcf" stroke-width="4" d="M12 3v18M3 12h18"/><path d="M12 3v18M3 12h18"/><use href="#p" x="12" y="12"/></svg></div>
<div class="vsep" style="height:24px;margin:0 2px 0 3px"></div>
<div class="tbtn"><svg class="ic"><path class="wh" d="M3 16l6-7 4 3-5 8q-4 1-5-4z"/><path d="M15 4v14M8 10h14"/><path d="M12 12l6-5" stroke="#245c42" stroke-width="3"/><use href="#p" x="15" y="10"/></svg></div>
<div class="tbtn"><svg class="ic"><path class="bk" d="M2 5h8v7H2z"/><path d="M4 5V3a2 2 0 0 1 4 0v2"/><path class="wh" d="M6 19l5-6 4 3-4 6q-4 1-5-3z"/><path d="M17 8v12M12 14h11"/><path d="M14 16l5-4" stroke="#245c42" stroke-width="3"/><use href="#p" x="17" y="14"/></svg></div>
<div class="vsep" style="height:33px;margin-left:1px;background:#a8a8a8"></div>
<div class="grip" style="margin:0 5px 0 4px"></div>
<div class="tbtn on"><svg class="ic"><path class="gn" d="M4 3h4v16H4z"/><use href="#mon"/></svg></div>
<div class="tbtn on"><svg class="ic"><path class="gn" d="M16 3h4v16h-4z"/><use href="#mon"/></svg></div>
<div class="tbtn"><svg class="ic"><path class="gn" d="M4 3h16v4H4z"/><use href="#mon"/></svg></div>
<div class="tbtn"><svg class="ic"><path class="gn" d="M4 14h16v5H4z"/><use href="#mon"/></svg></div>
<div class="tbtn"><svg class="ic"><path class="gn" d="M7 7h7v7H7z"/><use href="#mon"/></svg></div>
<div class="vsep" style="height:33px;margin-left:1px;background:#a8a8a8"></div>
<div class="grip" style="margin:0 3px 0 4px"></div>
<div class="tbtn"><svg class="ic"><path class="bk" d="M5 8h3v3h3v3H8v3.500H5V14H2v-3h3z"/><path d="M12.500 2.500h9v19h-9z" stroke="#777" fill="#fff"/><path stroke="#777" d="M14 6.500h6m-6 4h6m-6 4h6m-6 4h6"/></svg></div>
<div class="tbtn"><svg class="ic"><path class="bk" d="M5 8h3v3h3v3H8v3.500H5V14H2v-3h3z"/><path d="M12.500 2.500h9v19h-9z" stroke="#777" fill="#b5ffd9"/><path d="M14 10l6-6M12 12h9"/><circle cx="17" cy="17" r="3"/></svg></div>
</div>

<div class="status d-flex flex-shrink-0">
<pre style="width:191px;padding-left:6px">42.0446 , 121.3658
128.4423 &lt; 70.89°</pre><div class="vsep"></div>
<pre style="width:191px;padding-left:6px">42.0446 , 121.3658
128.4423 &lt; 70.89°</pre><div class="vsep"></div>
<div class="d-flex justify-content-center" style="width:306px;padding-left:4px"><svg class="ic"><path d="M3 9q3-5 6-4 3 1 3 4"/><rect x="9.500" y="6.500" width="11" height="17" rx="4" fill="#fff"/><path class="gn" stroke="#444" d="M13 6.500h4v6h-4z"/><path d="M10 13h10"/></svg></div><div class="vsep"></div>
<pre style="width:48px;padding-left:4px;letter-spacing:-.2px">Selected
0</pre><pre style="width:71px;padding-left:3px;letter-spacing:-.2px">Total Length
0</pre><div class="vsep"></div>
<pre style="width:118px;padding-left:4px">Current Layer
Tarama</pre><div class="vsep"></div>
<pre style="width:70px;padding-left:7px">Grid Status
10 / 100</pre><div class="vsep"></div>
</div>

<div class="about">
<div class="atitle d-flex align-items-center"><svg width="17" height="16" style="margin:0 5px 0 7px" fill="none" stroke="#8ad615" stroke-width="2"><circle cx="8.500" cy="8" r="6.500"/><path stroke-width="1.500" d="M1 1h2M14 1h2M1 15h2M14 15h2"/><path stroke="#555" d="M1 8h15"/></svg>About<span style="margin-left:33px;font-size:13px">?</span><svg width="11" height="11" style="margin-left:36px" stroke="#111"><path d="M.5.500l10 10m0-10l-10 10"/></svg></div>
<div class="grp"><span class="lg">LibreCAD</span><div style="padding-top:14px">Version: 2.1.3<br>Compiler: GNU GCC 4.9.1<br>Compiled on: Sep 23 2016<br>Qt Version: 5.4.1<br>Boost Version: 1.60.0</div>
<div class="copyb">Copy</div><a href="#">Contributors</a><a href="#">License</a><a href="#">The Code</a></div>
</div>

<script>
// Grid: a dot every 46.12 px, a dotted meta line every ten dots
const step = 46.12, ox = 338.5, oy = 649.5;
let g = '';
for (let r = -12; r <= 7; r++) for (let c = -1; c <= 26; c++)
  g += `<path d="M${Math.floor(ox + c * step)} ${Math.floor(oy + r * step) + .5}h1"/>`;
for (const y of [188.5, 649.5]) g += `<path stroke-dasharray="1 2" d="M252 ${y}h1326"/>`;
for (const x of [338.5, 799.5, 1261.5]) g += `<path stroke-dasharray="1 2" d="M${x} 82v911"/>`;
document.getElementById('grid').innerHTML = g;

document.getElementById('rivets').innerHTML = [[1069.4, 492.7], [1176, 492.3], [1292.7, 498], [1402.4, 513.7]]
  .map(([x, y]) => [14.6, 22, 29].map(r => `<circle cx="${x}" cy="${y}" r="${r}"/>`).join('')).join('');

// Drawing notes: word, left, right, baseline; bullets are drawn wider than the letters
const words = [['Çizen:', 378, 463, 746], ['Mustafa', 482, 605, 746], ['Halil', 625, 688, 746], ['(', 709, 717, 746],
  ['@AcikKaynakci', 737, 960, 746], [')', 980, 988, 746], ['Referans', 377, 516, 860.5], ['Calisma;', 536, 656, 860.5],
  ['*', 396, 415, 905], ['Sanatci', 435, 546, 900], [':', 565, 571, 900], ['Finlay', 589, 677, 900], ['Pearston', 696, 836, 900],
  ['*', 396, 415, 943], ['Model', 434, 518, 937.5], ['Adi', 540, 586, 937.5], [':', 605, 611, 937.5], ['Combat', 631, 738, 937.5], ['Knife', 757, 836, 937.5],
  ['*', 396, 415, 981], ['https://www.artstation.com/artwork/AqRvWN', 434, 1148, 975.5]];
const k = .86;
let t = words.map(([w, a, b, y]) => `<text transform="translate(${a} ${y}) scale(${w === '*' ? 1.22 : k} 1)"${w.length > 1 ? ` textLength="${(b - a) / k}"` : ''}>${w}</text>`).join('');
t += `<text font-family="Liberation Sans" font-size="30" y="799" x="${Array.from({length: 10}, (_, i) => 380 + i * 35.9).join(' ')}">——————————</text>`;
document.getElementById('notes').innerHTML = t;

document.getElementById('dots9').innerHTML = [5, 12, 19].map(x => [3.5, 9, 15, 20.5].map(y => `<circle class="g" cx="${x}" cy="${y}" r="1.500"/>`).join('')).join('');

document.getElementById('layers').innerHTML = [['0', '#000'], ['Etiket', '#0f0'], ['Govde', '#0ff'], ['Sarı', '#ff0'], ['Tarama', '#800000']]
  .map(([n, c], i) => `<div class="lrow"><span><svg width="14" height="12"><use href="#eye${i ? '' : 'g'}"/></svg></span><span><svg width="12" height="14"><use href="#lock"/></svg></span><span><svg width="12" height="14"><use href="#prl"/></svg></span><span><svg width="14" height="14"><use href="#hash"/></svg></span><span><i class="sw" style="background:${c}"></i></span><span${i === 4 ? ' style="background:#f0f0f0"' : ''}>${n}</span></div>`).join('');
</script>
</body>
</html>
